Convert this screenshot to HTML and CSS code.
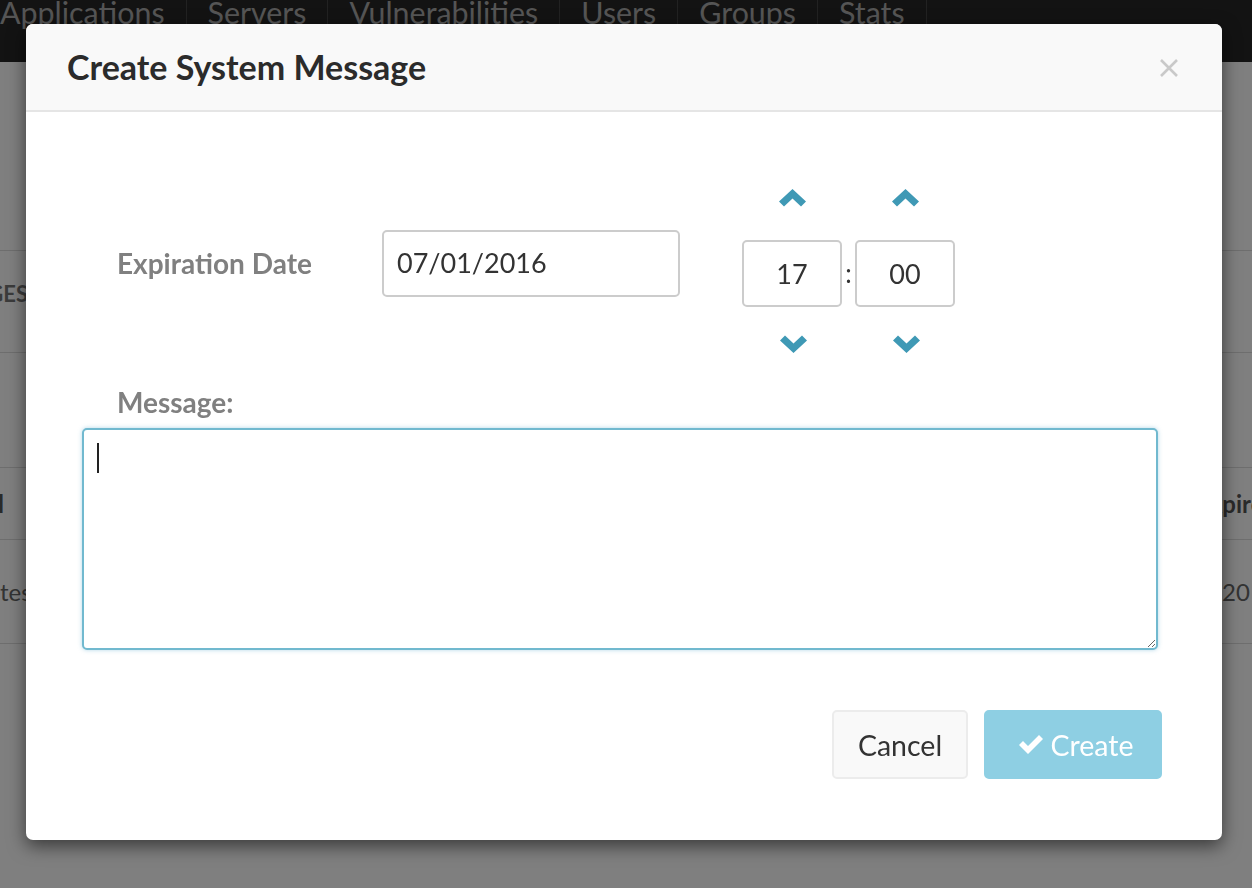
FILE: index.html
```html
<!DOCTYPE html>
<html lang="en">
<head>
<meta charset="utf-8">
<title>Create System Message</title>
<link rel="stylesheet" href="styles.css">
</head>
<body>
<div class="page">
  <nav class="navbar">
    <a class="nav-item">Applications</a>
    <a class="nav-item">Servers</a>
    <a class="nav-item">Vulnerabilities</a>
    <a class="nav-item">Users</a>
    <a class="nav-item">Groups</a>
    <a class="nav-item">Stats</a>
  </nav>
  <div class="page-body">
    <div class="panel-heading">
      <div class="cell-left"><span class="heading-text">SYSTEM MESSAGES</span></div>
    </div>
    <div class="table">
      <div class="trow thead">
        <div class="cell-left narrow"><span>Label</span></div>
        <div class="cell-right hdr"><span>Expires</span></div>
      </div>
      <div class="trow tdata">
        <div class="cell-left start"><span>test</span></div>
        <div class="cell-right data"><span>20 min</span></div>
      </div>
    </div>
  </div>
</div>

<div class="backdrop"></div>

<div class="modal">
  <div class="modal-header">
    <h1 class="modal-title">Create System Message</h1>
    <button class="close" aria-label="Close">
      <svg width="20" height="20" viewBox="0 0 20 20"><path d="M2 2 L18 18 M18 2 L2 18" stroke="#c9c9c9" stroke-width="2.6" fill="none"/></svg>
    </button>
  </div>
  <div class="modal-body">
    <div class="exp-row">
      <label class="field-label exp-label">Expiration Date</label>
      <div class="date-input">07/01/2016</div>
      <div class="time-picker">
        <div class="time-col">
          <div class="spin up"><svg width="27" height="18" viewBox="0 0 27 18"><polygon points="0,12.5 13.5,0 27,12.5 22,17.5 13.5,9.5 5,17.5" fill="#3f99b5"/></svg></div>
          <div class="time-input">17</div>
          <div class="spin down"><svg width="27" height="18" viewBox="0 0 27 18"><polygon points="0,5.5 13.5,18 27,5.5 22,0.5 13.5,8.5 5,0.5" fill="#3f99b5"/></svg></div>
        </div>
        <div class="time-sep">:</div>
        <div class="time-col">
          <div class="spin up"><svg width="27" height="18" viewBox="0 0 27 18"><polygon points="0,12.5 13.5,0 27,12.5 22,17.5 13.5,9.5 5,17.5" fill="#3f99b5"/></svg></div>
          <div class="time-input">00</div>
          <div class="spin down"><svg width="27" height="18" viewBox="0 0 27 18"><polygon points="0,5.5 13.5,18 27,5.5 22,0.5 13.5,8.5 5,0.5" fill="#3f99b5"/></svg></div>
        </div>
      </div>
    </div>
    <label class="field-label msg-label">Message:</label>
    <div class="textarea-wrap">
      <textarea class="message"></textarea>
      <span class="caret"></span>
    </div>
  </div>
  <div class="modal-footer">
    <button class="btn btn-cancel">Cancel</button>
    <button class="btn btn-create"><svg width="24" height="19" viewBox="0 0 24 19"><polygon points="0,10 4,6 9,11 20,0 24,4 9,19" fill="#fff"/></svg><span>Create</span></button>
  </div>
</div>
</body>
</html>
```

FILE: styles.css
```css
* { box-sizing: border-box; }
html, body { margin: 0; padding: 0; }
body {
  width: 1252px;
  height: 888px;
  overflow: hidden;
  background: #fff;
  font-family: Lato, "Open Sans", sans-serif;
  color: #333;
}

/* background page */
.navbar {
  display: flex;
  height: 62px;
  background: #262626;
  margin-left: -21px;
}
.nav-item {
  display: block;
  height: 62px;
  padding: 0 21px;
  font-size: 30.4px;
  line-height: 25px;
  color: #aaa;
  border-right: 1px solid #444;
}
.page-body { padding-top: 188px; }
.panel-heading {
  height: 103px;
  border-top: 1px solid #ddd;
  border-bottom: 1px solid #ddd;
  display: flex;
  align-items: center;
}
.cell-left {
  width: 28px;
  display: flex;
  justify-content: flex-end;
  white-space: nowrap;
}
.cell-left.narrow { width: 4px; }
.cell-left.start { justify-content: flex-start; }
.heading-text {
  font-weight: 700;
  font-size: 22px;
  color: #777;
  padding-bottom: 16px;
}
.table { margin-top: 114px; }
.trow {
  display: flex;
  justify-content: space-between;
  align-items: center;
  border-top: 1px solid #ddd;
  font-size: 24px;
}
.thead { height: 72px; font-weight: 700; color: #555; }
.tdata { height: 105px; border-bottom: 1px solid #ddd; color: #666; }
.cell-right { width: 52px; white-space: nowrap; overflow: hidden; }
.cell-right.hdr span { display: inline-block; margin-left: -4px; }
.cell-right.data { padding-left: 22px; }

.backdrop {
  position: fixed;
  inset: 0;
  background: rgba(0, 0, 0, 0.5);
}

/* modal */
.modal {
  position: absolute;
  top: 24px;
  left: 26px;
  width: 1196px;
  background: #fff;
  border-radius: 7px;
  box-shadow: 0 6px 18px rgba(0, 0, 0, 0.55);
  overflow: hidden;
}
.modal-header {
  height: 88px;
  background: #f9f9f9;
  border-bottom: 2px solid #e5e5e5;
  display: flex;
  align-items: center;
  justify-content: space-between;
  padding: 0 43px 0 41px;
}
.modal-title {
  margin: 0;
  font-size: 34px;
  font-weight: 700;
  line-height: 86px;
  color: #2b2b2b;
}
.close {
  border: 0;
  background: none;
  padding: 0;
  width: 20px;
  height: 20px;
  display: block;
  margin-top: 2px;
}
.close svg { display: block; }

.modal-body { padding: 73px 64px 0 56px; }
.exp-row {
  display: flex;
  align-items: flex-start;
  padding-left: 35px;
}
.field-label {
  display: block;
  font-size: 28px;
  line-height: 24px;
  font-weight: 700;
  color: #808080;
}
.exp-label { width: 265px; margin-top: 66px; }
.date-input {
  width: 298px;
  height: 67px;
  margin-top: 45px;
  border: 2px solid #ccc;
  border-radius: 5px;
  padding-left: 13px;
  font-size: 27px;
  line-height: 62px;
  color: #333;
}
.time-picker {
  display: flex;
  margin-left: 62px;
  align-items: flex-start;
}
.time-col { width: 100px; display: flex; flex-direction: column; align-items: center; }
.spin { display: flex; justify-content: center; width: 100%; }
.spin svg { display: block; }
.spin.up { height: 55px; padding-top: 4px; }
.spin.down { height: 46px; padding-top: 28px; }
.spin.up svg { margin-left: 1px; }
.spin.down svg { margin-left: 3px; }
.time-input {
  width: 100px;
  height: 67px;
  border: 2px solid #ccc;
  border-radius: 5px;
  text-align: center;
  font-size: 27px;
  line-height: 63px;
  color: #333;
}
.time-sep {
  width: 13px;
  margin-top: 55px;
  height: 67px;
  line-height: 67px;
  text-align: center;
  font-size: 26px;
  color: #333;
}
.msg-label { margin-top: 37px; margin-left: 35px; }
.textarea-wrap { position: relative; margin-top: 14px; }
.message {
  display: block;
  width: 1076px;
  height: 222px;
  border: 2px solid #71b9cf;
  border-radius: 5px;
  box-shadow: 0 0 4px rgba(102, 175, 210, 0.5);
  outline: none;
  resize: vertical;
  font-family: inherit;
  font-size: 24px;
  padding: 12px 14px;
}
.caret {
  position: absolute;
  left: 15px;
  top: 15px;
  width: 2px;
  height: 30px;
  background: #222;
}

.modal-footer {
  display: flex;
  justify-content: flex-end;
  gap: 16px;
  padding: 60px 60px 61px;
}
.btn {
  height: 69px;
  border-radius: 5px;
  font-family: inherit;
  font-size: 28.5px;
  display: flex;
  align-items: center;
  justify-content: center;
  gap: 8px;
  padding: 0;
}
.btn-cancel {
  width: 136px;
  background: #f9f9f9;
  border: 2px solid #ececec;
  color: #333;
}
.btn-create {
  width: 178px;
  background: #8ecfe3;
  border: 2px solid #8ecfe3;
  color: #fff;
  padding-left: 6px;
}
.btn-create svg { display: block; }
```
